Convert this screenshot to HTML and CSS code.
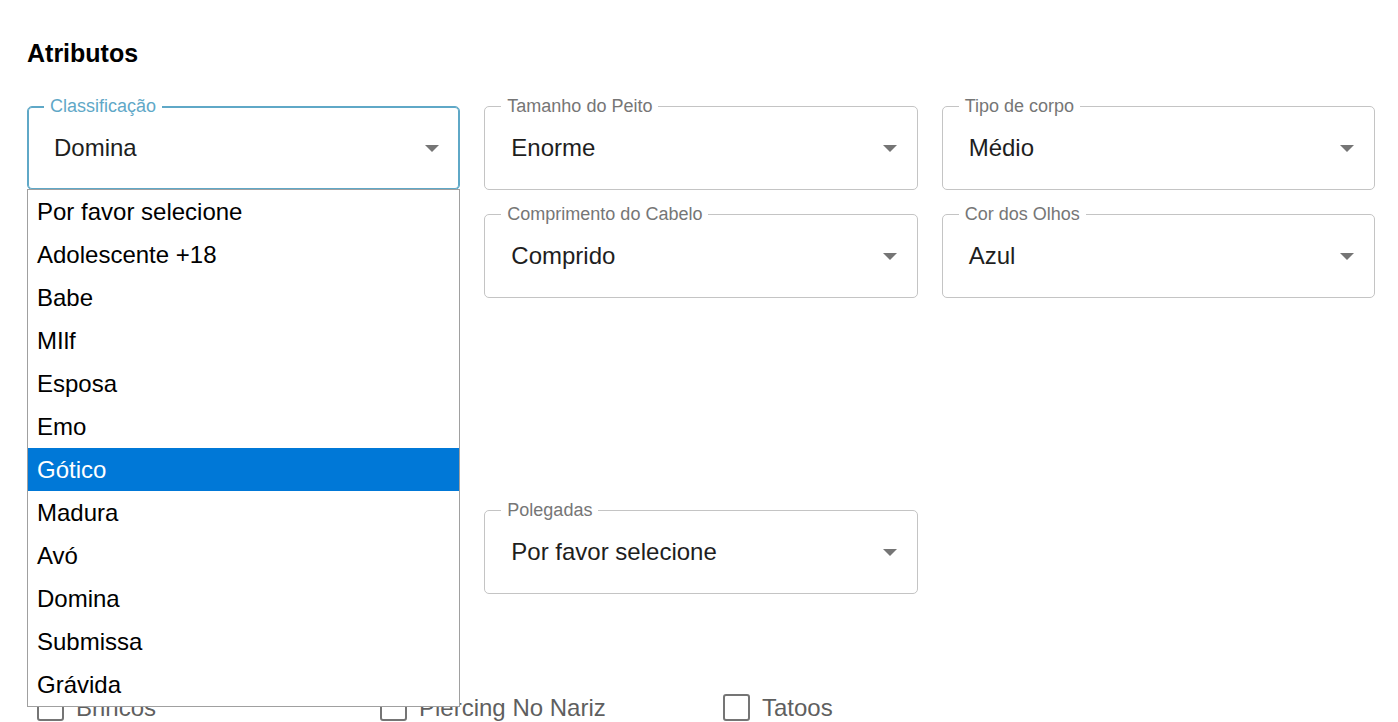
FILE: index.html
```html
<!DOCTYPE html>
<html lang="pt">
<head>
<meta charset="utf-8">
<title>Atributos</title>
<link rel="stylesheet" href="styles.css">
</head>
<body>
<main class="page">
  <h2 class="title">Atributos</h2>

  <div class="grid">
    <div class="field focused">
      <span class="label">Classificação</span>
      <span class="value">Domina</span>
      <span class="arrow"></span>
      <ul class="listbox">
        <li>Por favor selecione</li>
        <li>Adolescente +18</li>
        <li>Babe</li>
        <li>MIlf</li>
        <li>Esposa</li>
        <li>Emo</li>
        <li class="active">Gótico</li>
        <li>Madura</li>
        <li>Avó</li>
        <li>Domina</li>
        <li>Submissa</li>
        <li>Grávida</li>
      </ul>
    </div>
    <div class="field">
      <span class="label">Tamanho do Peito</span>
      <span class="value">Enorme</span>
      <span class="arrow"></span>
    </div>
    <div class="field">
      <span class="label">Tipo de corpo</span>
      <span class="value">Médio</span>
      <span class="arrow"></span>
    </div>

    <div class="field">
      <span class="label">Cor do Cabelo</span>
      <span class="value">Preto</span>
      <span class="arrow"></span>
    </div>
    <div class="field">
      <span class="label">Comprimento do Cabelo</span>
      <span class="value">Comprido</span>
      <span class="arrow"></span>
    </div>
    <div class="field">
      <span class="label">Cor dos Olhos</span>
      <span class="value">Azul</span>
      <span class="arrow"></span>
    </div>

    <div class="field">
      <span class="label">Etnia</span>
      <span class="value">Branca</span>
      <span class="arrow"></span>
    </div>
  </div>

  <div class="grid height-row">
    <div class="field">
      <span class="label">Pés</span>
      <span class="value">Por favor selecione</span>
      <span class="arrow"></span>
    </div>
    <div class="field">
      <span class="label">Polegadas</span>
      <span class="value">Por favor selecione</span>
      <span class="arrow"></span>
    </div>
  </div>

  <div class="checks">
    <label class="check"><span class="box"></span><span class="check-text">Brincos</span></label>
    <label class="check"><span class="box"></span><span class="check-text">Piercing No Nariz</span></label>
    <label class="check"><span class="box"></span><span class="check-text">Tatoos</span></label>
  </div>
</main>
</body>
</html>
```
FILE: styles.css
```css
html, body {
  margin: 0;
  padding: 0;
  background: #ffffff;
}

body {
  font-family: "Liberation Sans", Arial, sans-serif;
  color: #212121;
}

.page {
  padding: 38px 23px 0 27px;
  width: 1348px;
}

.title {
  margin: 0;
  font-size: 25px;
  line-height: 30px;
  font-weight: 700;
  color: #000000;
}

.grid {
  display: grid;
  grid-template-columns: repeat(3, 1fr);
  column-gap: 24px;
  row-gap: 24px;
  margin-top: 38px;
}

.height-row {
  margin-top: 104px;
}

.field {
  position: relative;
  box-sizing: border-box;
  height: 84px;
  border: 1px solid #c4c4c4;
  border-radius: 5px;
  display: flex;
  align-items: center;
  padding: 0 20px 0 26px;
}

.field.focused {
  border-color: #5fa8c7;
  box-shadow: inset 0 0 0 1px #5fa8c7;
  z-index: 5;
}

.label {
  position: absolute;
  top: -10px;
  left: 16px;
  padding: 0 6px;
  background: #ffffff;
  font-size: 18px;
  line-height: 18px;
  color: #767676;
  white-space: nowrap;
}

.focused .label {
  color: #5fa8c7;
}

.value {
  flex: 1;
  font-size: 24px;
  color: #1e1e1e;
  white-space: nowrap;
}

.arrow {
  width: 0;
  height: 0;
  border-left: 7px solid transparent;
  border-right: 7px solid transparent;
  border-top: 7px solid #757575;
}

.listbox {
  position: absolute;
  top: 100%;
  left: -1px;
  right: -1px;
  margin: 0;
  padding: 0;
  list-style: none;
  background: #ffffff;
  border: 1px solid #a0a0a0;
  z-index: 10;
}

.listbox li {
  height: 43px;
  line-height: 43px;
  padding-left: 9px;
  font-size: 24px;
  color: #000000;
  white-space: nowrap;
}

.listbox li.active {
  background: #0078d7;
  color: #ffffff;
}

.checks {
  display: grid;
  grid-template-columns: repeat(3, 343px);
  margin-top: 100px;
  padding-left: 10px;
}

.check {
  display: flex;
  align-items: center;
  gap: 12px;
  height: 27px;
}

.box {
  box-sizing: border-box;
  width: 27px;
  height: 27px;
  border: 2.5px solid #757575;
  border-radius: 3px;
  background: #ffffff;
}

.check-text {
  font-size: 24px;
  color: #5f5f5f;
  line-height: 27px;
}
```
